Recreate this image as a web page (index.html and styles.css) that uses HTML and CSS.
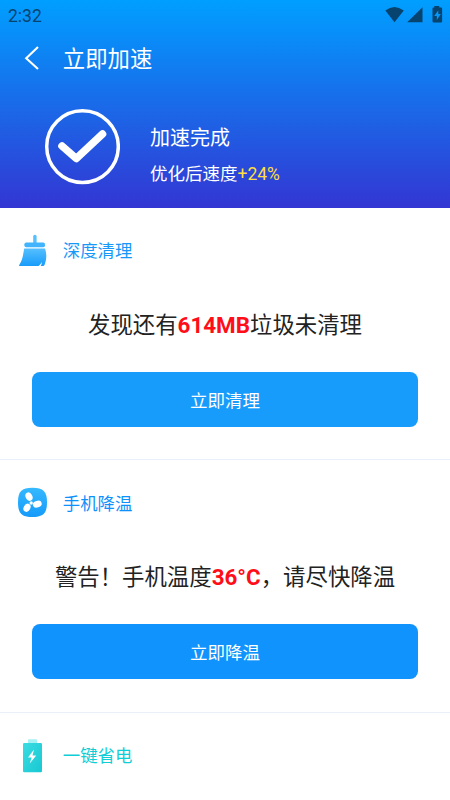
FILE: index.html
```
<!DOCTYPE html>
<html lang="zh-CN">
<head>
<meta charset="utf-8">
<title>立即加速</title>
<link rel="stylesheet" href="styles.css">
</head>
<body>
<header class="hero">
  <div class="status">
    <span class="clock">2:32</span>
    <svg class="status-icons" width="60" height="20" viewBox="0 0 60 20" fill="#07436f">
      <path d="M2.3 5.6Q11.3-1.4 20.8 5.6L11.5 17.2Z"/>
      <path d="M39.5 2.2V17.2H24.2Z"/>
      <path fill-rule="evenodd" d="M51.3 1h5v1.5h2q.8 0 .8.8V16.6q0 .8-.8.8h-8q-.8 0-.8-.8V3.3q0-.8.8-.8h1zM55.3 5.2L51.2 11h2.6v4l4-6h-2.5z"/>
    </svg>
  </div>
  <div class="toolbar">
    <svg class="back" width="16" height="24" viewBox="0 0 16 24" fill="none" stroke="#fff" stroke-width="2.1"><path d="M15 1L3.2 12.2L15 23"/></svg>
    <h1>立即加速</h1>
  </div>
  <div class="result">
    <svg width="76" height="76" viewBox="0 0 76 76" fill="none" stroke="#fff">
      <circle cx="38.5" cy="37.6" r="35.8" stroke-width="3.5"/>
      <path d="M18 37L32.3 49.5L58.5 25" stroke-width="7.6" stroke-linecap="round" stroke-linejoin="round"/>
    </svg>
    <div class="result-text">
      <p class="done">加速完成</p>
      <p class="speed">优化后速度<span>+24%</span></p>
    </div>
  </div>
</header>
<main>
  <section class="card">
    <div class="card-title">
      <svg width="30" height="34" viewBox="0 0 30 34">
        <defs><linearGradient id="brush" x1="0" y1="0" x2="0" y2="1"><stop offset="0" stop-color="#55bfff"/><stop offset="1" stop-color="#189cfa"/></linearGradient></defs>
        <path d="M15.2 9V2.5q0-1.8 1.7-1.8t1.7 1.8V9z" fill="#55bfff"/>
        <rect x="6.4" y="8.5" width="20.6" height="4.7" rx="1.8" fill="#42b4fe"/>
        <path d="M6.2 14.5H27C28.4 19 29.2 24 26.5 31Q26 32 25 32H22.7C23.7 30.4 23.9 29.4 23.8 28C23 29.8 21.8 31 20.5 32H1.6Q.7 32 1.2 31C4.3 26.5 4.9 22 6.2 14.5Z" fill="url(#brush)"/>
      </svg>
      <h2>深度清理</h2>
    </div>
    <p class="message">发现还有<b>614MB</b>垃圾未清理</p>
    <button class="action clean">立即清理</button>
  </section>
  <section class="card">
    <div class="card-title">
      <svg width="30" height="34" viewBox="0 0 30 34">
        <defs><linearGradient id="fan" x1="0" y1="0" x2="0" y2="1"><stop offset="0" stop-color="#35b9ff"/><stop offset="1" stop-color="#159afa"/></linearGradient></defs>
        <path d="M14.4 1.8C25.4 1.8 29 5.5 29 16.3S25.4 31 14.4 31S0 27.2 0 16.3S3.6 1.8 14.4 1.8Z" fill="url(#fan)"/>
        <g fill="#fff">
          <circle cx="13.2" cy="17" r="1.7"/>
          <ellipse cx="11" cy="10.6" rx="3.3" ry="4.4" transform="rotate(-28 11 10.6)"/>
          <ellipse cx="19.3" cy="18.1" rx="4.5" ry="3.3" transform="rotate(-18 19.3 18.1)"/>
          <ellipse cx="9" cy="21.8" rx="3.3" ry="4.3" transform="rotate(28 9 21.8)"/>
        </g>
      </svg>
      <h2 class="cool-title">手机降温</h2>
    </div>
    <p class="message">警告！手机温度<b>36°C</b>，请尽快降温</p>
    <button class="action cool">立即降温</button>
  </section>
  <section class="card card-last">
    <div class="card-title">
      <svg width="30" height="34" viewBox="0 0 30 34">
        <defs><linearGradient id="power" x1="0" y1="0" x2="1" y2="1"><stop offset="0" stop-color="#3bdce2"/><stop offset="1" stop-color="#18c8d2"/></linearGradient></defs>
        <rect x="10" y=".3" width="9" height="5" rx="1" fill="#a5f1f4"/>
        <rect x="5" y="4" width="19" height="29.3" rx="1.2" fill="url(#power)"/>
        <path d="M16 10.5L10 18.5H13.6L11.8 24.5L18.2 16.4H14.5Z" fill="#fff"/>
      </svg>
      <h2 class="power-title">一键省电</h2>
    </div>
  </section>
</main>
</body>
</html>
```
FILE: styles.css
```
* { box-sizing: border-box; }
body {
  margin: 0;
  height: 800px;
  overflow: hidden;
  background: #fff;
  font-family: Roboto, "Noto Sans CJK SC", sans-serif;
}
h1, h2, p { margin: 0; font-weight: 400; }
svg { display: block; flex: none; }
.hero {
  height: 207.5px;
  color: #fff;
  background: linear-gradient(#009fff, #3336d3);
}
.status {
  height: 30px;
  padding: 5px 7px 0 8px;
  display: flex;
  justify-content: space-between;
  color: #07436f;
}
.clock { padding-top: 1px; font-size: 17.5px; line-height: 21px; }
.toolbar {
  height: 56px;
  padding-left: 23px;
  display: flex;
  align-items: center;
}
.toolbar h1 { margin: 2px 0 0 23.8px; font-size: 22.4px; line-height: 32px; }
.result {
  padding: 23px 0 0 44px;
  display: flex;
}
.result-text { padding: 14px 0 0 30px; }
.done { font-size: 20px; line-height: 30px; }
.speed { margin-top: 7.5px; font-size: 17.5px; line-height: 26px; }
.speed span { color: #ffdf3e; }
.card {
  height: 252.5px;
  padding: 26px 32px 0;
  border-bottom: 1px solid #e9f0fa;
}
.card-last { height: auto; border-bottom: 0; }
.card-title {
  height: 34px;
  margin-left: -14px;
  display: flex;
  align-items: center;
}
.card-title h2 { margin: 1px 0 0 14.8px; font-size: 17.4px; line-height: 26px; color: #1698f9; }
.card-title .cool-title { color: #0f91fb; }
.card-title .power-title { color: #10ced6; }
.message {
  margin-top: 40.4px;
  text-align: center;
  white-space: nowrap;
  font-size: 22.4px;
  line-height: 34px;
  color: #222;
}
.message b { color: #ff0d19; font-weight: 700; }
.action {
  display: block;
  width: 100%;
  height: 55px;
  margin-top: 29.8px;
  padding: 0;
  border: 0;
  border-radius: 8px;
  color: #fff;
  font: inherit;
  font-size: 17.5px;
}
.clean { background: #189cfc; }
.cool { background: #1093fc; }
```
